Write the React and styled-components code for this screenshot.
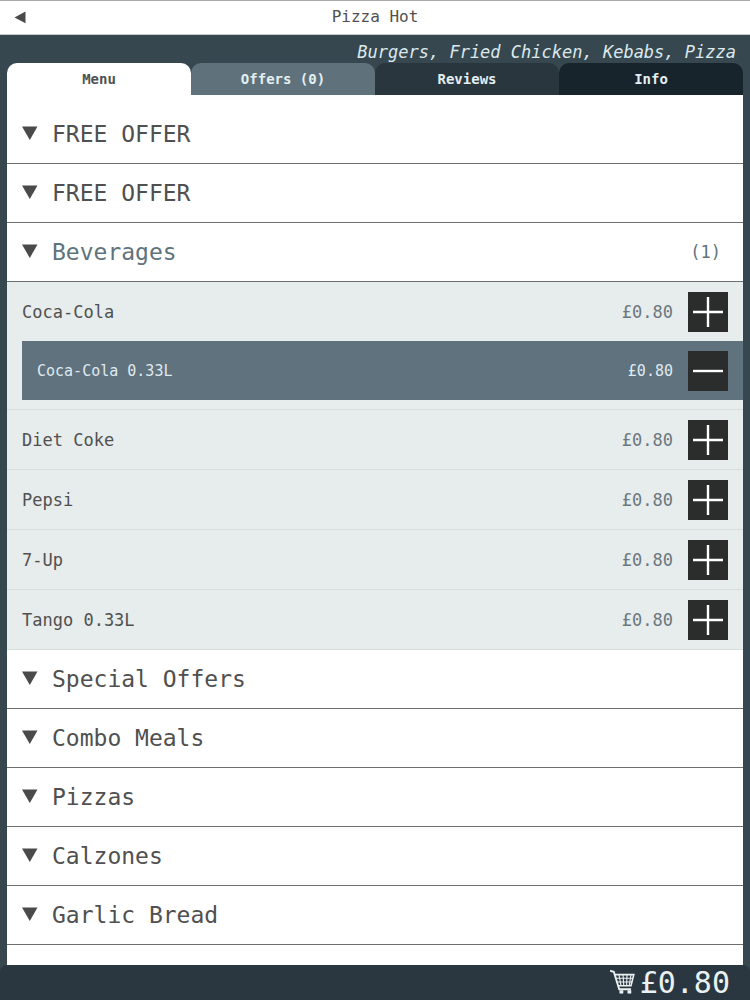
import React, { useState } from 'react'
import styled, { createGlobalStyle, css } from 'styled-components'

const tabs = [
    { name: 'Menu', color: '#ffffff' },
    { name: 'Offers (0)', color: '#5f727c' },
    { name: 'Reviews', color: '#2a363e' },
    { name: 'Info', color: '#18242c' },
]

const drinks = [
    { name: 'Coca-Cola', price: '£0.80', picked: [{ name: 'Coca-Cola 0.33L', price: '£0.80' }] },
    { name: 'Diet Coke', price: '£0.80' },
    { name: 'Pepsi', price: '£0.80' },
    { name: '7-Up', price: '£0.80' },
    { name: 'Tango 0.33L', price: '£0.80' },
]

const categories = [
    { id: 1, name: 'FREE OFFER' },
    { id: 2, name: 'FREE OFFER' },
    { id: 3, name: 'Beverages', count: 1, items: drinks },
    { id: 4, name: 'Special Offers' },
    { id: 5, name: 'Combo Meals' },
    { id: 6, name: 'Pizzas' },
    { id: 7, name: 'Calzones' },
    { id: 8, name: 'Garlic Bread' },
]

const QtyIcon = ({ minus }) => (
    <svg width="30" height="30" viewBox="0 0 30 30" stroke="#fff" strokeWidth="2.4" aria-hidden="true">
        <path d={minus ? 'M0 15H30' : 'M0 15H30M15 0V30'} />
    </svg>
)

const CartIcon = () => (
    <svg width="26" height="26" viewBox="0 0 26 26" fill="none" stroke="#e9f1f3" strokeWidth="1.1" aria-hidden="true">
        <path d="M0 0.8L3.8 1.8L9.2 19.2H21" strokeWidth="1.9" />
        <path d="M4.6 4.6H23.8L21 15.8H8" strokeWidth="1.6" />
        <path d="M6 8.3H23M7 12H22M9 4.6L11 15.8M13 4.6L13.8 15.8M17 4.6L16.6 15.8M21 4.6L19.2 15.8" />
        <path d="M9.8 20.4H13V23.2H9.8ZM17.8 20.4H21V23.2H17.8Z" fill="#e9f1f3" strokeWidth="0.6" />
    </svg>
)

const App = () => {
    const [activeTab, setActiveTab] = useState('Menu')
    const [openId, setOpenId] = useState(3)

    const toggleCategory = (id) => {
        setOpenId(openId === id ? null : id)
    }

  return (
    <>
    <GlobalStyle />
    <Page>
        <Header>
            <BackButton aria-label="Back">
                <svg width="12" height="14" viewBox="0 0 12 14" fill="#4a4a4a"><path d="M0.5 6.4L11.5 0.5V12.3Z" /></svg>
            </BackButton>
            <Title>Pizza Hot</Title>
        </Header>
        <Cuisines>Burgers, Fried Chicken, Kebabs, Pizza</Cuisines>
        <Tabs role="tablist">
            {tabs.map((tab) => (
                <Tab
                    key={tab.name}
                    role="tab"
                    aria-selected={activeTab === tab.name}
                    $color={tab.color}
                    $light={tab.name === 'Menu'}
                    onClick={() => setActiveTab(tab.name)}
                >
                    {tab.name}
                </Tab>
            ))}
        </Tabs>
        <Panel>
            {categories.map((category) => {
                const open = openId === category.id
                return (
                    <section key={category.id}>
                        <Category aria-expanded={open} $open={open} onClick={() => toggleCategory(category.id)}>
                            <svg width="16" height="16" viewBox="0 0 16 16" fill="#4a4a4a" aria-hidden="true"><path d="M0 0.5H15.5L7.8 14Z" /></svg>
                            <CategoryName>{category.name}</CategoryName>
                            {category.count && <Count>({category.count})</Count>}
                        </Category>
                        {open && category.items && (
                            <Items>
                                {category.items.map((item) => (
                                    <Item key={item.name}>
                                        <Row>
                                            <Name>{item.name}</Name>
                                            <Price>{item.price}</Price>
                                            <QtyButton aria-label={'Add ' + item.name}><QtyIcon /></QtyButton>
                                        </Row>
                                        {item.picked && (
                                            <Picked>
                                                {item.picked.map((p) => (
                                                    <Row key={p.name} $picked>
                                                        <Name>{p.name}</Name>
                                                        <Price>{p.price}</Price>
                                                        <QtyButton aria-label={'Remove ' + p.name}><QtyIcon minus /></QtyButton>
                                                    </Row>
                                                ))}
                                            </Picked>
                                        )}
                                    </Item>
                                ))}
                            </Items>
                        )}
                    </section>
                )
            })}
        </Panel>
        <Footer>
            <Basket>
                <CartIcon />
                £0.80
            </Basket>
        </Footer>
    </Page>
    </>
  )
}

export default App

const GlobalStyle = createGlobalStyle`
    * {
        box-sizing: border-box;
    }
    body {
        margin: 0;
        font-family: "DejaVu Sans Mono", "Liberation Mono", monospace;
        color: #505050;
    }
    button {
        font: inherit;
        color: inherit;
        border: none;
        padding: 0;
        background: none;
        cursor: pointer;
    }
`

const Page = styled.div`
    display: flex;
    flex-direction: column;
    height: 100vh;
    background-color: #36474f;
`

const Header = styled.header`
    display: grid;
    grid-template-columns: 40px 1fr 40px;
    align-items: center;
    flex-shrink: 0;
    height: 35px;
    border-top: 1px solid #a9a9a9;
    border-bottom: 1px solid #c4c9cb;
    background-color: #ffffff;
`

const BackButton = styled.button`
    display: flex;
    justify-content: center;
    align-items: center;
    height: 32px;
`

const Title = styled.h1`
    margin: 0;
    padding-bottom: 2px;
    font-size: 16px;
    font-weight: normal;
    line-height: 30px;
    text-align: center;
`

const Cuisines = styled.p`
    flex-shrink: 0;
    margin: 0;
    padding: 3px 14px 0;
    height: 28px;
    font-size: 17px;
    font-style: italic;
    line-height: 28px;
    text-align: right;
    color: #dce9ee;
`

const Tabs = styled.div`
    display: grid;
    grid-template-columns: repeat(4, 1fr);
    flex-shrink: 0;
    margin: 0 7px;
`

const Tab = styled.button`
    && {
        height: 32px;
        border-radius: 10px 10px 0 0;
        background-color: ${props => props.$color};
        font-size: 14px;
        font-weight: bold;
        color: #e4eef2;

        ${props =>
            props.$light && css`
            color: #505050;
        `}
    }
`

const Panel = styled.main`
    flex: 1;
    min-height: 0;
    overflow: hidden;
    margin: 0 7px;
    padding-top: 10px;
    background-color: #ffffff;
`

const Category = styled.button`
    && {
        display: flex;
        align-items: center;
        gap: 14px;
        width: 100%;
        height: 59px;
        padding: 0 22px 0 15px;
        border-bottom: 1px solid #6c7073;
        text-align: left;
        color: ${props => props.$open ? '#61737b' : '#505050'};
    }
`

const CategoryName = styled.span`
    flex: 1;
    font-size: 23px;
`

const Count = styled.span`
    font-size: 17px;
`

const Items = styled.ul`
    margin: 0;
    padding: 0;
    list-style: none;
    background-color: #e7ecec;
`

const Item = styled.li`
    border-bottom: 1px solid #d6dddd;
`

const Name = styled.span`
    flex: 1;
`

const Price = styled.span`
    color: #6b787e;
`

const Row = styled.div`
    display: flex;
    align-items: center;
    gap: 15px;
    height: 59px;
    padding: 0 15px;
    font-size: 17px;

    ${props =>
        props.$picked && css`
        background-color: #5f727e;
        font-size: 15px;
        color: #dfeaf0;

        ${Price} {
            color: inherit;
        }
    `}
`

const Picked = styled.div`
    padding: 0 0 9px 15px;
`

const QtyButton = styled.button`
    && {
        display: flex;
        justify-content: center;
        align-items: center;
        width: 40px;
        height: 40px;
        background-color: #2b2d2d;
    }
`

const Footer = styled.footer`
    display: flex;
    justify-content: flex-end;
    flex-shrink: 0;
    height: 35px;
    padding: 0 20px;
    border-radius: 7px 7px 0 0;
    background-color: #2b3740;
`

const Basket = styled.button`
    && {
        display: flex;
        align-items: center;
        gap: 4px;
        font-size: 30px;
        line-height: 35px;
        color: #e9f1f3;
    }
`
